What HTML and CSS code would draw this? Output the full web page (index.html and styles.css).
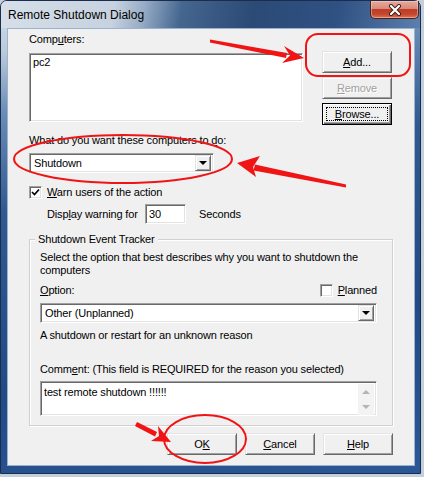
FILE: index.html
```html
<!DOCTYPE html>
<html>
	<head>
		<meta charset="UTF-8">
		<title>Remote Shutdown Dialog</title>
		<link rel="stylesheet" href="styles.css">
	</head>
	<body>
		<div class="window">
			<div class="titlebar">
				<span class="title">Remote Shutdown Dialog</span>
				<div class="close-btn">
					<svg width="14" height="12" viewBox="0 0 14 12">
						<path d="M3 2 L11 10 M11 2 L3 10" stroke="#3a1d18" stroke-width="4" stroke-linecap="round"/>
						<path d="M3 2 L11 10 M11 2 L3 10" stroke="#fff" stroke-width="2.2" stroke-linecap="round"/>
					</svg>
				</div>
			</div>
			<div class="client">
				<div class="computers-row">
					<div class="computers-col">
						<div>Comp<u>u</u>ters:</div>
						<div class="sunken listbox">pc2</div>
					</div>
					<div class="side-buttons">
						<button class="btn"><u>A</u>dd...</button>
						<button class="btn disabled"><u>R</u>emove</button>
						<button class="btn focused"><span class="focus-rect"><u>B</u>rowse...</span></button>
					</div>
				</div>
				<div class="action-label">What do you want these computers to <u>d</u>o:</div>
				<div class="sunken combo action-combo">
					<span class="combo-text">Shutdown</span>
					<span class="combo-btn"><span class="arrow-down"></span></span>
				</div>
				<div class="check-row warn-row">
					<span class="sunken checkbox">
						<svg width="9" height="9" viewBox="0 0 9 9"><path d="M1 4 L3.5 6.5 L8 1.5" fill="none" stroke="#000" stroke-width="1.7"/></svg>
					</span>
					<span><u>W</u>arn users of the action</span>
				</div>
				<div class="delay-row">
					<span class="delay-label">Disp<u>l</u>ay warning for</span>
					<div class="sunken delay-field">30</div>
					<span>Seconds</span>
				</div>
				<fieldset class="tracker">
					<legend>Shutdown Event Tracker</legend>
					<div class="tracker-body">
						<p class="tracker-desc">Select the option that best describes why you want to shutdown the computers</p>
						<div class="option-row">
							<span><u>O</u>ption:</span>
							<span class="check-row">
								<span class="sunken checkbox"></span>
								<span><u>P</u>lanned</span>
							</span>
						</div>
						<div class="sunken combo reason-combo">
							<span class="combo-text">Other (Unplanned)</span>
							<span class="combo-btn"><span class="arrow-down"></span></span>
						</div>
						<p class="reason-desc">A shutdown or restart for an unknown reason</p>
						<div class="comment-label">Comm<u>e</u>nt: (This field is REQUIRED for the reason you selected)</div>
						<div class="sunken comment-box">
							<span class="comment-text">test remote shutdown !!!!!!</span>
							<div class="scrollbar">
								<span class="arrow-up dim"></span>
								<span class="arrow-down dim"></span>
							</div>
						</div>
					</div>
				</fieldset>
				<div class="dialog-buttons">
					<button class="btn">O<u>K</u></button>
					<button class="btn"><u>C</u>ancel</button>
					<button class="btn"><u>H</u>elp</button>
				</div>
			</div>
		</div>

		<svg class="annotations" width="424" height="477" viewBox="0 0 424 477">
			<g fill="#f01414" stroke="none">
				<!-- arrow to Add -->
				<polygon points="210,39.5 287,53 286,58 210,42.5"/>
				<polygon points="304,58 284,46 290,55.5 282,63"/>
				<!-- arrow to Shutdown combo -->
				<polygon points="346,184.5 255,164.5 253.5,170.5 346,187.5"/>
				<polygon points="237,163 260,156 253,167 256,177"/>
				<!-- arrow to OK -->
				<polygon points="137,422 157,432 155,436.5 135,426"/>
				<polygon points="171,442 158,426 159,436 151,441"/>
			</g>
			<g fill="none" stroke="#f01414" stroke-width="2">
				<rect x="306" y="34" width="104" height="42" rx="12"/>
				<ellipse cx="123" cy="159" rx="109" ry="24"/>
				<ellipse cx="205" cy="439" rx="41" ry="24"/>
			</g>
		</svg>
	</body>
</html>
```

FILE: styles.css
```css
body {
	margin: 0;
	width: 424px;
	height: 477px;
	overflow: hidden;
	position: relative;
	background: #c3cfdb;
	font-family: "Liberation Sans", Arial, sans-serif;
	font-size: 11px;
	line-height: 13px;
	letter-spacing: -0.15px;
	color: #000;
}
p {
	margin: 0;
}
u {
	text-decoration-thickness: 1px;
	text-underline-offset: 1px;
}

/* window frame */
.window {
	width: 421px;
	height: 474px;
	box-sizing: border-box;
	border: 1px solid #1a2d4c;
	border-radius: 7px 7px 0 0;
	background: linear-gradient(168deg, #d3dde8 0%, #bccbdb 9%, #6a8cb8 20%, #2f5990 38%, #224b86 70%, #2a5896 100%);
	display: flex;
	flex-direction: column;
}
.titlebar {
	height: 27px;
	display: flex;
	align-items: flex-start;
	border-radius: 6px 6px 0 0;
	background: linear-gradient(100deg, #d6dfe9 0%, #c6d2df 27%, #97acc6 34%, #45668f 43%, #2b4a76 60%, #2f5183 80%, #5b7fae 100%);
}
.title {
	font-size: 12px;
	line-height: 15px;
	letter-spacing: 0;
	padding: 7px 0 0 7px;
	color: #000;
}
.close-btn {
	margin-left: auto;
	margin-right: 1px;
	width: 47px;
	height: 17px;
	border: 1px solid #47241d;
	border-top: none;
	border-radius: 0 0 5px 5px;
	background: linear-gradient(to bottom, #e8aa9c 0%, #d98a7a 45%, #bd3d26 50%, #c4472f 78%, #e07352 100%);
	box-shadow: inset 0 0 0 1px rgba(255, 220, 210, 0.45);
	display: flex;
	align-items: center;
	justify-content: center;
}
.client {
	margin: 0 5px 0 6px;
	height: 438px;
	box-sizing: border-box;
	border: 1px solid #9cb2cd;
	background: #f0f0f0;
	padding: 4px 0 0 21px;
}

/* classic 3d borders */
.sunken {
	box-sizing: border-box;
	background: #fff;
	border: 1px solid;
	border-color: #a0a0a0 #fff #fff #a0a0a0;
	box-shadow: inset 1px 1px #696969, inset -1px -1px #e3e3e3;
}
.btn {
	display: flex;
	align-items: center;
	justify-content: center;
	box-sizing: border-box;
	width: 70px;
	height: 22px;
	padding: 0;
	margin: 0;
	font: inherit;
	letter-spacing: inherit;
	color: #000;
	background: #f0f0f0;
	border: 1px solid;
	border-color: #e3e3e3 #696969 #696969 #e3e3e3;
	box-shadow: inset 1px 1px #fff, inset -1px -1px #a0a0a0;
}
.btn.disabled {
	color: #a0a0a0;
	text-shadow: 1px 1px #fff;
}
.btn.focused {
	border-color: #000;
	box-shadow: inset 1px 1px #fff, inset -1px -1px #696969, inset -2px -2px #a0a0a0;
}
.focus-rect {
	display: flex;
	align-items: center;
	justify-content: center;
	width: 60px;
	height: 12px;
	border: 1px dotted #000;
}

/* computers */
.computers-row {
	display: flex;
	align-items: flex-start;
}
.computers-col {
	width: 274px;
}
.listbox {
	margin-top: 7px;
	height: 69px;
	padding: 2px 3px;
}
.side-buttons {
	margin: 18px 0 0 19px;
	display: flex;
	flex-direction: column;
	gap: 4px;
}

/* action */
.action-label {
	margin-top: 9px;
}
.combo {
	display: flex;
	align-items: center;
	height: 20px;
	padding: 2px;
}
.combo-text {
	flex: 1;
	padding-left: 2px;
}
.combo-btn {
	width: 16px;
	height: 16px;
	box-sizing: border-box;
	background: #f0f0f0;
	border: 1px solid;
	border-color: #e3e3e3 #696969 #696969 #e3e3e3;
	box-shadow: inset 1px 1px #fff, inset -1px -1px #a0a0a0;
	display: flex;
	align-items: center;
	justify-content: center;
}
.arrow-down {
	width: 0;
	height: 0;
	border-left: 4px solid transparent;
	border-right: 4px solid transparent;
	border-top: 4px solid #000;
}
.arrow-up {
	width: 0;
	height: 0;
	border-left: 4px solid transparent;
	border-right: 4px solid transparent;
	border-bottom: 4px solid #000;
}
.dim.arrow-down {
	border-top-color: #b4b4b4;
}
.dim.arrow-up {
	border-bottom-color: #b4b4b4;
}
.action-combo {
	margin-top: 6px;
	width: 185px;
}
.check-row {
	display: flex;
	align-items: center;
	gap: 5px;
}
.checkbox {
	width: 13px;
	height: 13px;
	display: flex;
	align-items: center;
	justify-content: center;
}
.warn-row {
	margin-top: 13px;
	height: 13px;
}
.delay-row {
	margin: 5px 0 0 18px;
	display: flex;
	align-items: center;
}
.delay-label {
	width: 98px;
}
.delay-field {
	width: 41px;
	height: 20px;
	padding: 3px 3px 0;
	margin-right: 13px;
}

/* shutdown event tracker */
.tracker {
	margin: 9px 0 0;
	width: 364px;
	box-sizing: border-box;
	padding: 5px 15px 9px 5px;
	border: 1px solid #d0d0d0;
	box-shadow: inset 1px 1px #fff, 1px 1px #fff;
	min-inline-size: 0;
}
.tracker legend {
	padding: 0 3px;
	background: #f0f0f0;
	line-height: 13px;
}
.tracker-body {
	padding-left: 5px;
}
.option-row {
	margin-top: 7px;
	height: 13px;
	display: flex;
	align-items: center;
	justify-content: space-between;
}
.reason-combo {
	margin-top: 6px;
}
.reason-desc {
	margin-top: 6px;
}
.comment-label {
	margin-top: 21px;
}
.comment-box {
	margin-top: 5px;
	height: 35px;
	padding: 2px 2px 2px 3px;
	display: flex;
	align-items: flex-start;
}
.comment-text {
	flex: 1;
	padding-top: 2px;
}
.scrollbar {
	width: 16px;
	height: 31px;
	background: #f3f3f3;
	display: flex;
	flex-direction: column;
	align-items: center;
	justify-content: space-between;
	padding: 6px 0;
	box-sizing: border-box;
}

.dialog-buttons {
	margin-top: 7px;
	width: 364px;
	display: flex;
	justify-content: flex-end;
	gap: 8px;
}

/* red markup drawn over the dialog */
.annotations {
	position: absolute;
	left: 0;
	top: 0;
	pointer-events: none;
}
```
